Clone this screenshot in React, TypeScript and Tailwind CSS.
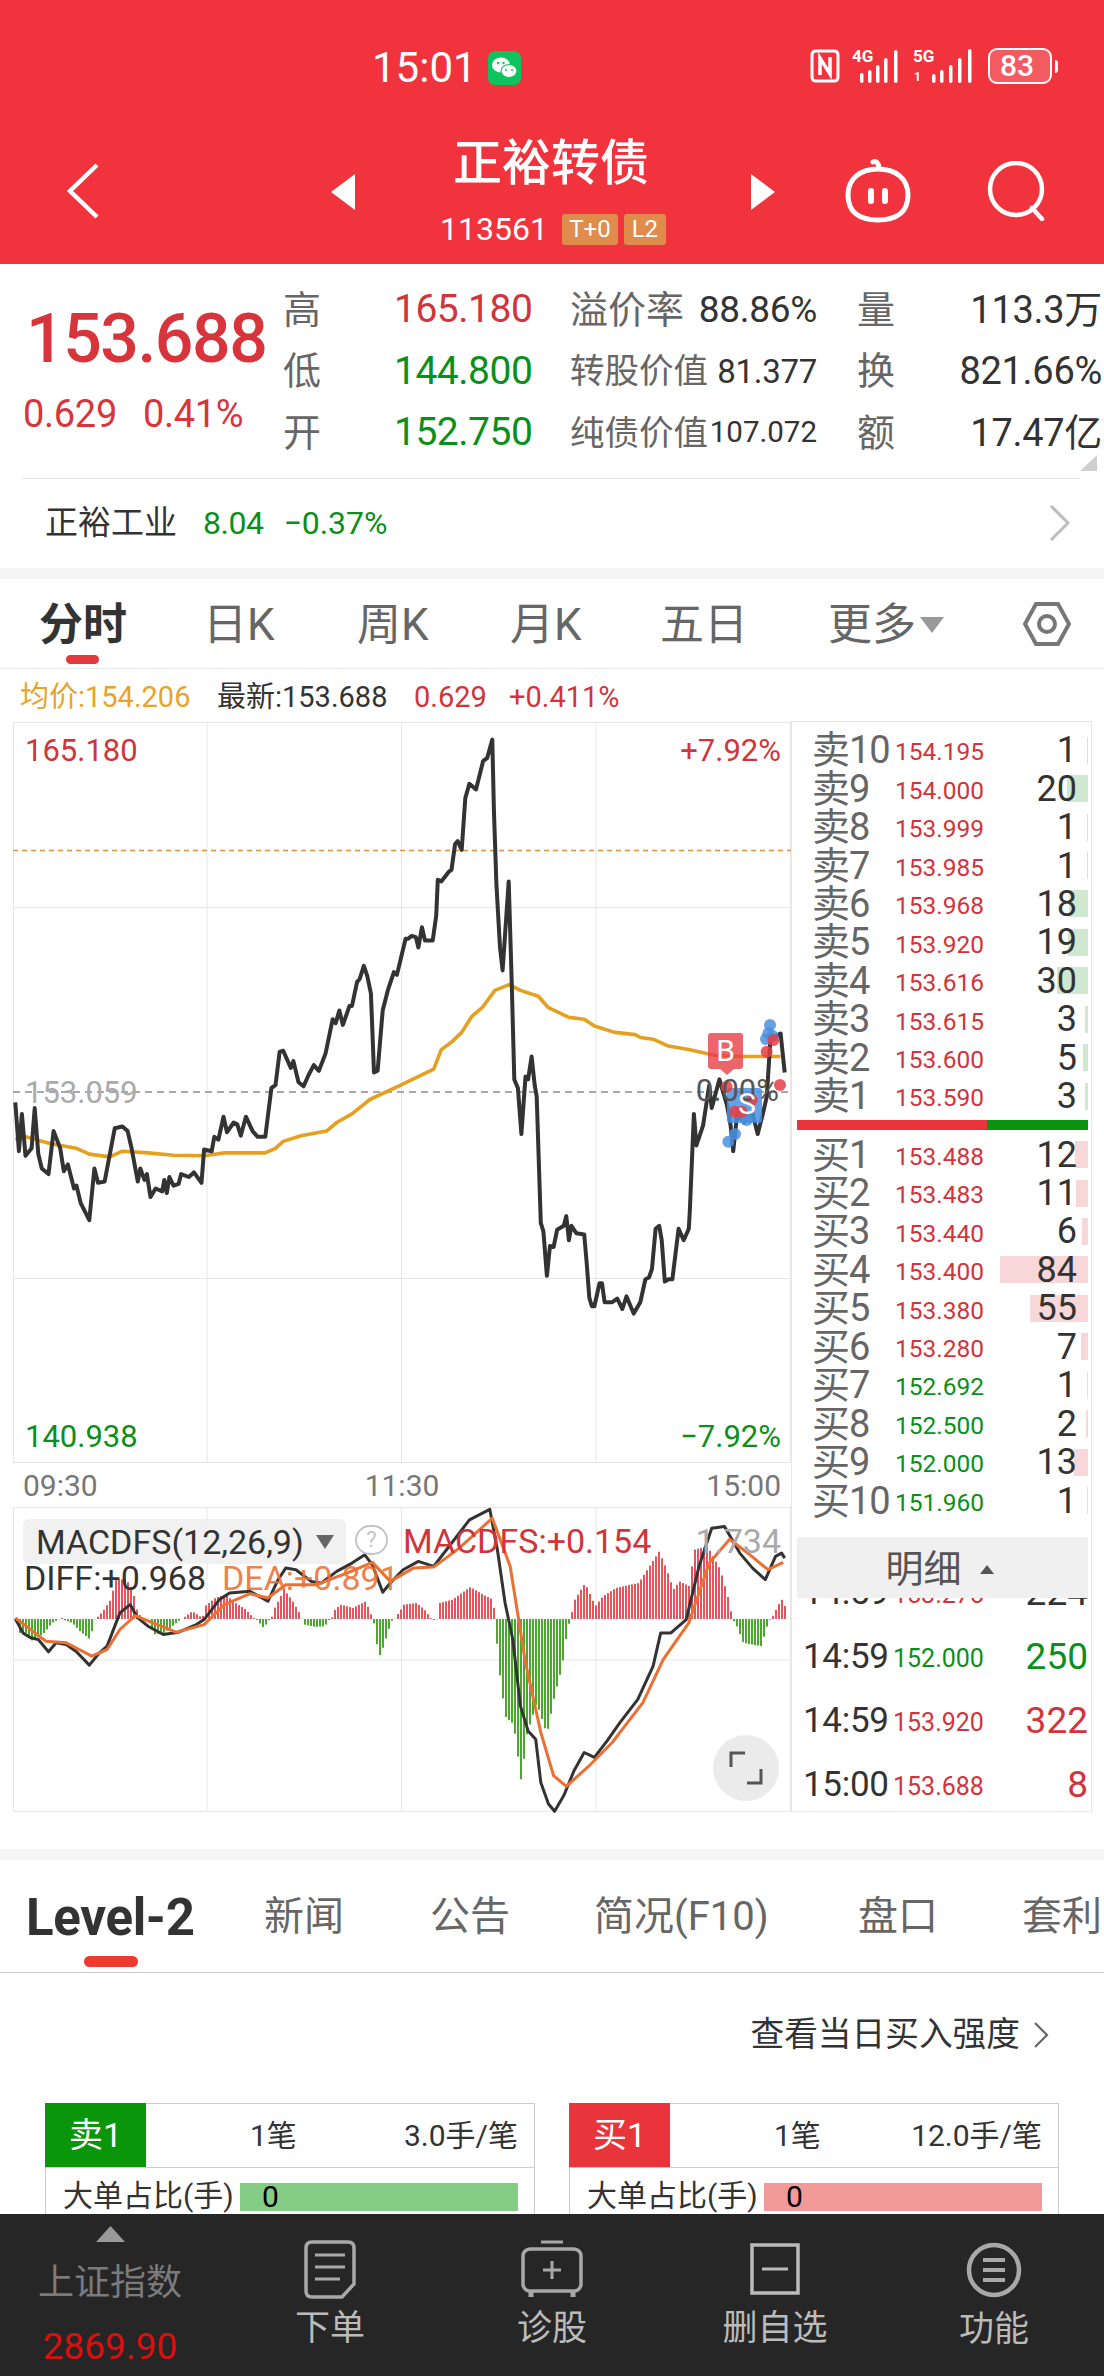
import React from 'react';

type Pt = [number, number];

// traced from the chart, in crop coordinates
const pricePts: Pt[] = [[30,910],[37,995],[43,930],[50,1003],[62,990],[68,920],[75,1000],[82,1025],[95,1035],[105,960],[118,990],[125,1030],[133,1018],[145,1060],[150,1055],[158,1085],[175,1115],[185,1025],[192,1050],[205,1048],[225,955],[240,952],[250,960],[258,990],[270,1048],[275,1025],[283,1045],[288,1035],[295,1075],[305,1060],[318,1065],[322,1045],[327,1068],[332,1040],[340,1055],[350,1052],[355,1035],[370,1040],[380,1032],[395,1050],[400,992],[415,995],[420,970],[428,975],[438,935],[445,962],[458,945],[465,948],[472,968],[482,935],[495,960],[505,970],[520,970],[532,885],[540,880],[548,822],[555,820],[570,850],[575,838],[585,875],[595,882],[605,862],[615,845],[625,855],[638,825],[652,765],[658,772],[665,750],[672,775],[685,742],[690,742],[700,700],[705,695],[713,672],[720,690],[727,720],[733,858],[740,855],[750,750],[760,715],[772,683],[778,688],[795,625],[800,625],[807,620],[815,622],[820,640],[827,605],[833,628],[848,628],[855,585],[858,522],[865,525],[880,508],[885,505],[892,460],[897,455],[905,470],[912,380],[920,355],[933,365],[947,315],[955,310],[965,278],[968,400],[973,530],[980,640],[985,680],[997,525],[1003,700],[1008,870],[1015,885],[1022,965],[1030,865],[1035,870],[1042,830],[1048,880],[1052,900],[1060,1120],[1065,1135],[1072,1212],[1078,1160],[1085,1162],[1092,1132],[1105,1125],[1110,1108],[1115,1150],[1120,1125],[1130,1138],[1145,1140],[1150,1190],[1155,1250],[1160,1265],[1165,1265],[1175,1225],[1180,1225],[1185,1258],[1200,1258],[1210,1252],[1220,1270],[1228,1248],[1242,1278],[1255,1258],[1265,1218],[1272,1215],[1278,1200],[1285,1130],[1292,1125],[1297,1150],[1303,1222],[1310,1218],[1318,1218],[1330,1130],[1340,1150],[1350,1130],[1352,1100],[1360,930],[1365,985],[1378,950],[1390,880],[1395,920],[1410,870],[1425,915],[1432,950],[1437,995],[1445,930],[1458,945],[1475,930],[1485,965],[1495,930],[1503,900],[1510,800],[1530,790],[1538,858]];

const avgPts: Pt[] = [[30,975],[50,970],[100,982],[150,990],[175,1000],[215,1005],[240,995],[290,998],[340,1002],[400,1003],[440,998],[520,998],[540,990],[555,978],[590,968],[640,960],[660,945],[690,930],[725,905],[780,882],[850,852],[865,818],[885,805],[905,788],[925,760],[945,745],[970,715],[998,705],[1020,715],[1055,725],[1075,745],[1115,762],[1145,765],[1165,777],[1205,788],[1245,792],[1255,797],[1280,800],[1310,812],[1350,818],[1400,828],[1450,830],[1530,830]];

const diffPts: Pt[] = [[30,388],[45,430],[60,445],[75,450],[95,487],[110,460],[130,465],[150,487],[175,527],[195,490],[210,470],[235,370],[255,345],[270,385],[290,410],[320,435],[350,428],[385,405],[400,390],[430,330],[450,310],[490,305],[525,335],[545,270],[560,235],[580,240],[610,275],[630,280],[660,245],[690,220],[715,195],[730,225],[750,308],[765,280],[790,240],[820,215],[850,230],[880,170],[920,90],[960,58],[975,180],[990,340],[1005,450],[1020,650],[1035,725],[1050,750],[1060,880],[1075,945],[1087,967],[1105,920],[1125,845],[1145,790],[1165,805],[1190,755],[1215,700],[1250,630],[1280,530],[1295,430],[1315,430],[1345,390],[1370,230],[1395,115],[1420,110],[1450,190],[1475,235],[1500,270],[1520,200],[1532,190],[1538,205]];

const deaPts: Pt[] = [[30,385],[60,420],[90,455],[130,460],[180,500],[210,480],[235,420],[265,378],[300,400],[345,428],[400,405],[440,345],[490,312],[525,325],[560,285],[620,285],[680,250],[730,218],[765,275],[810,235],[850,232],[900,175],[965,85],[1000,230],[1030,520],[1060,730],[1085,860],[1110,892],[1155,830],[1200,760],[1260,640],[1300,510],[1350,400],[1390,220],[1430,148],[1470,195],[1505,240],[1535,218]];

const histEnvelope: Pt[] = [[30,388],[35,430],[50,430],[58,455],[70,445],[85,430],[100,400],[115,388],[120,385],[125,392],[140,400],[155,425],[175,450],[183,390],[186,388],[200,365],[215,330],[225,270],[245,268],[258,300],[268,370],[280,388],[292,388],[298,435],[320,430],[350,392],[355,388],[375,365],[395,385],[400,350],[420,325],[440,315],[460,340],[480,360],[495,385],[500,388],[515,415],[525,392],[530,388],[535,360],[555,300],[570,330],[585,370],[590,388],[595,405],[615,412],[635,410],[642,392],[648,388],[652,365],[665,345],[690,355],[715,335],[728,385],[730,388],[735,450],[742,500],[750,470],[765,395],[772,388],[790,345],[815,340],[830,360],[845,390],[850,392],[857,388],[860,340],[885,330],[920,292],[945,315],[965,330],[968,388],[972,460],[980,590],[990,685],[1005,705],[1020,880],[1030,740],[1050,640],[1070,735],[1085,620],[1100,530],[1110,420],[1116,388],[1125,330],[1145,280],[1165,350],[1180,320],[1205,295],[1250,280],[1290,185],[1305,240],[1318,300],[1330,275],[1350,290],[1358,180],[1385,170],[1410,240],[1430,350],[1432,388],[1440,400],[1455,460],[1490,470],[1505,392],[1510,388],[1530,328],[1540,360]];

const mainLine = (pts: Pt[]) => pts.map(([x, y]) => `${(x / 1.96).toFixed(1)},${(580 + y / 1.742).toFixed(1)}`).join(' ');
const subLine = (pts: Pt[]) => pts.map(([x, y]) => `${(x / 1.96).toFixed(1)},${(1490 + y / 3.01).toFixed(1)}`).join(' ');

const envelopeAt = (x: number) => {
  for (let i = 1; i < histEnvelope.length; i++) {
    const [x0, y0] = histEnvelope[i - 1];
    const [x1, y1] = histEnvelope[i];
    if (x <= x1) return y0 + ((y1 - y0) * (x - x0)) / (x1 - x0 || 1);
  }
  return 388;
};

const histBars = Array.from({ length: 261 }, (_, i) => {
  const px = 16 + i * 3;
  return { px, top: 1490 + envelopeAt(px * 1.96) / 3.01 };
});

const sells = [
  ['卖10', '154.195', 1],
  ['卖9', '154.000', 20],
  ['卖8', '153.999', 1],
  ['卖7', '153.985', 1],
  ['卖6', '153.968', 18],
  ['卖5', '153.920', 19],
  ['卖4', '153.616', 30],
  ['卖3', '153.615', 3],
  ['卖2', '153.600', 5],
  ['卖1', '153.590', 3],
] as const;

const buys = [
  ['买1', '153.488', 12, true],
  ['买2', '153.483', 11, true],
  ['买3', '153.440', 6, true],
  ['买4', '153.400', 84, true],
  ['买5', '153.380', 55, true],
  ['买6', '153.280', 7, true],
  ['买7', '152.692', 1, false],
  ['买8', '152.500', 2, false],
  ['买9', '152.000', 13, false],
  ['买10', '151.960', 1, false],
] as const;

const trades = [
  ['14:59', '153.275', '224', 'text-[#d1343a]', 'text-[#333]'],
  ['14:59', '152.000', '250', 'text-[#0a8f1a]', 'text-[#0a8f1a]'],
  ['14:59', '153.920', '322', 'text-[#d1343a]', 'text-[#d1343a]'],
  ['15:00', '153.688', '8', 'text-[#d1343a]', 'text-[#d1343a]'],
];

const BookRow = ({ label, price, qty, priceColor, barColor }: { label: string; price: string; qty: number; priceColor: string; barColor: string }) => (
  <div className="relative flex h-[38.45px] items-center">
    <div className={`absolute right-0 h-[27px] ${barColor}`} style={{ width: Math.max(qty * 1.05, 1.5) }} />
    <span className="relative w-[98px] shrink-0 pl-[15px] text-[38px] leading-none tracking-[-1px] whitespace-nowrap text-[#666]">{label}</span>
    <span className={`relative mt-[5px] text-[24.5px] leading-none ${priceColor}`}>{price}</span>
    <span className="relative flex-1 pr-[11px] text-right text-[36px] leading-none text-[#333]">{qty}</span>
  </div>
);

const Dot = ({ x, y, c }: { x: number; y: number; c: string }) => <circle cx={640 + x / 3} cy={960 + y / 3} r="6" fill={c} fillOpacity="0.85" />;

const QuoteRow = ({ a, v, color, l, lv, lvSize, b, bv }: { a: string; v: string; color: string; l: React.ReactNode; lv: string; lvSize: string; b: string; bv: string }) => (
  <div className="flex h-[61.5px] items-center">
    <span className="w-[111px] text-[38px] leading-none text-[#666]">{a}</span>
    <span className={`w-[176px] text-[39px] leading-none tracking-[-0.5px] ${color}`}>{v}</span>
    <div className="flex w-[247px] items-center justify-between">
      <span className="whitespace-nowrap leading-none text-[#666]">{l}</span>
      <span className={`leading-none text-[#333] ${lvSize}`}>{lv}</span>
    </div>
    <span className="ml-[40px] w-[60px] text-[38px] leading-none text-[#666]">{b}</span>
    <span className="w-[185px] whitespace-nowrap text-right text-[38px] leading-none tracking-[-0.3px] text-[#333]">{bv}</span>
  </div>
);

const App: React.FC = () => {
  return (
    <div className="flex h-[2376px] w-[1104px] flex-col overflow-hidden bg-white font-['Roboto','Noto_Sans_CJK_SC',sans-serif]">
      {/* red header */}
      <header className="h-[264px] shrink-0 bg-[#f0333c] text-white">
        <div className="flex h-[136px] items-start pt-[48px]">
          <span className="ml-[372px] w-[100px] whitespace-nowrap text-[42px] leading-[40px]">15:01</span>
          <svg className="ml-[16px] mt-[3px]" width="33" height="34" viewBox="0 0 33 34">
            <rect width="33" height="34" rx="7" fill="#0fc45e" />
            <ellipse cx="13" cy="14" rx="9" ry="7.5" fill="#fff" />
            <ellipse cx="21" cy="20" rx="8" ry="6.5" fill="#fff" stroke="#0fc45e" strokeWidth="1.2" />
            <circle cx="10" cy="12" r="1.2" fill="#0fc45e" />
            <circle cx="15.5" cy="12" r="1.2" fill="#0fc45e" />
            <circle cx="18" cy="19" r="1" fill="#0fc45e" />
            <circle cx="24" cy="19" r="1" fill="#0fc45e" />
          </svg>
          <div className="ml-[289px] flex items-center">
            <svg width="30" height="34" viewBox="0 0 30 34" fill="none" stroke="#fff" strokeWidth="3">
              <path d="M6 2 H24 Q28 2 28 6 V28 Q28 32 24 32 H6 Q2 32 2 28 V6 Q2 2 6 2Z" />
              <path d="M10 26 V9 L20 25 V8" strokeWidth="3.5" />
            </svg>
            <div className="relative ml-[12px] h-[34px] w-[50px]">
              <span className="absolute left-0 top-[-1px] text-[17px] font-bold leading-none">4G</span>
              <svg className="absolute left-0 top-0" width="50" height="34" fill="#fff">
                <rect x="8" y="24" width="3.5" height="10" rx="1.7" />
                <rect x="16" y="21" width="3.5" height="13" rx="1.7" />
                <rect x="24" y="16" width="3.5" height="18" rx="1.7" />
                <rect x="32" y="9" width="3.5" height="25" rx="1.7" />
                <rect x="42" y="1" width="3.5" height="33" rx="1.7" />
              </svg>
            </div>
            <div className="relative ml-[11px] h-[34px] w-[63px]">
              <span className="absolute left-0 top-[-1px] text-[17px] font-bold leading-none">5G</span>
              <span className="absolute left-[1px] top-[22px] text-[12px] font-bold leading-none">1</span>
              <svg className="absolute left-0 top-0" width="63" height="34" fill="#fff">
                <rect x="19" y="25" width="3.5" height="9" rx="1.7" />
                <rect x="27" y="21" width="3.5" height="13" rx="1.7" />
                <rect x="36" y="16" width="3.5" height="18" rx="1.7" />
                <rect x="45" y="9" width="3.5" height="25" rx="1.7" />
                <rect x="55" y="0" width="3.5" height="34" rx="1.7" />
              </svg>
            </div>
            <div className="ml-[12px] flex h-[36px] w-[64px] items-center rounded-[9px] border-[2px] border-white bg-white/20">
              <span className="w-[54px] text-center text-[30px] font-medium leading-none">83</span>
            </div>
            <div className="ml-[3px] h-[13px] w-[3px] rounded-r-full bg-white" />
          </div>
        </div>
        <div className="flex items-start">
          <svg className="ml-[66px] mt-[27px]" width="34" height="56" viewBox="0 0 34 56" fill="none" stroke="#fff" strokeWidth="4.5">
            <path d="M31 2 L4 28 L31 54" />
          </svg>
          <svg className="ml-[231px] mt-[38px]" width="24" height="36" viewBox="0 0 24 36" fill="#fff">
            <path d="M24 0 V36 L0 18Z" />
          </svg>
          <div className="ml-[85px] flex w-[230px] flex-col pt-[3px]">
            <span className="whitespace-nowrap pl-[13px] text-[49px] font-medium leading-[50px]">正裕转债</span>
            <div className="mt-[24px] flex items-center">
              <span className="text-[32px] leading-[32px]">113561</span>
              <span className="ml-[14px] flex h-[31px] w-[56px] items-center justify-center rounded-[3px] bg-[#e08c4c] text-[24px] leading-none">T+0</span>
              <span className="ml-[6px] flex h-[31px] w-[42px] items-center justify-center rounded-[3px] bg-[#e08c4c] text-[24px] leading-none">L2</span>
            </div>
          </div>
          <svg className="ml-[81px] mt-[38px]" width="24" height="36" viewBox="0 0 24 36" fill="#fff">
            <path d="M0 0 V36 L24 18Z" />
          </svg>
          <svg className="ml-[67px] mt-[22px]" width="72" height="66" viewBox="0 0 72 64" fill="none" stroke="#fff" strokeWidth="5">
            <path d="M31 3 Q36 1 37 9" strokeLinecap="round" />
            <path d="M6 36 C6 19 19 10 36 10 C53 10 66 19 66 36 C66 53 55 61 36 61 C17 61 6 53 6 36Z" />
            <path d="M29 32 V42 M43 32 V42" strokeWidth="6" strokeLinecap="round" />
          </svg>
          <svg className="ml-[72px] mt-[25px]" width="62" height="60" viewBox="0 0 62 60" fill="none" stroke="#fff" strokeWidth="4.5">
            <circle cx="30" cy="28" r="26" />
            <path d="M46 47 L56 58" strokeLinecap="round" />
          </svg>
        </div>
      </header>

      {/* quote */}
      <section className="relative flex h-[215px] shrink-0">
        <div className="w-[283px] shrink-0 pl-[26px]">
          <div className="mt-[41px] text-[68px] font-medium leading-[68px] tracking-[-1.5px] text-[#d8343c]">153.688</div>
          <div className="mt-[23px] flex text-[38px] leading-[36px] text-[#d8343c]">
            <span className="-ml-[3px] tracking-[-0.3px]">0.629</span>
            <span className="ml-[26px] tracking-[-0.3px]">0.41%</span>
          </div>
        </div>
        <div className="pt-[15px]">
          <QuoteRow a="高" v="165.180" color="text-[#d1343a]" l={<span className="text-[38px]">溢价率</span>} lv="88.86%" lvSize="text-[37px] tracking-[-0.3px]" b="量" bv="113.3万" />
          <QuoteRow a="低" v="144.800" color="text-[#0a8f1a]" l={<span className="text-[34.5px]">转股价值</span>} lv="81.377" lvSize="text-[33px] tracking-[-0.3px]" b="换" bv="821.66%" />
          <QuoteRow a="开" v="152.750" color="text-[#0a8f1a]" l={<span className="text-[34.5px]">纯债价值</span>} lv="107.072" lvSize="text-[29.5px]" b="额" bv="17.47亿" />
        </div>
        <svg className="absolute left-[1080px] top-[191px]" width="17" height="16" fill="#cfcfcf"><path d="M17 0 V16 H0Z" /></svg>
        <div className="absolute bottom-0 left-[22px] h-[1px] w-[1057px] bg-[#e5e5e5]" />
      </section>

      <section className="flex h-[89px] shrink-0 items-center pb-[2px]">
        <span className="ml-[45px] text-[33px] leading-none text-[#333]">正裕工业</span>
        <span className="ml-[26px] text-[32px] leading-none tracking-[-0.5px] text-[#0a8f1a]">8.04</span>
        <span className="ml-[20px] text-[32px] leading-none text-[#0a8f1a]">−0.37%</span>
        <svg className="ml-auto mr-[33px]" width="22" height="36" viewBox="0 0 22 36" fill="none" stroke="#bdbdbd" strokeWidth="3">
          <path d="M2 1 L19 18 L2 35" />
        </svg>
      </section>
      <div className="h-[11px] shrink-0 bg-[#f5f5f5]" />

      {/* chart tabs */}
      <nav className="grid h-[90px] shrink-0 grid-cols-[164px_154px_153px_150px_168px_195px_auto] items-center border-b border-[#e8e8e8] pl-[39px] pt-[2px] text-[44px] leading-none text-[#666]">
        <span className="relative whitespace-nowrap font-bold text-[#333]">
          分时
          <span className="absolute left-[27px] top-[52px] h-[9px] w-[33px] rounded-full bg-[#e23a3f]" />
        </span>
        <span>日K</span>
        <span>周K</span>
        <span>月K</span>
        <span>五日</span>
        <span className="flex items-center">
          更多
          <svg className="ml-[4px]" width="24" height="16" fill="#999"><path d="M0 0 H24 L12 16Z" /></svg>
        </span>
        <svg className="-mt-[2px]" width="48" height="48" viewBox="0 0 48 48" fill="none" stroke="#777" strokeWidth="4">
          <path d="M13 4 H35 L46 24 L35 44 H13 L2 24Z" />
          <circle cx="24" cy="24" r="8" />
        </svg>
      </nav>

      <div className="flex h-[52px] shrink-0 items-center whitespace-nowrap pt-[5px] text-[29px] leading-none">
        <span className="ml-[20px] w-[197px] text-[#e8a32a]">均价:154.206</span>
        <span className="w-[197px] text-[#333]">最新:153.688</span>
        <span className="w-[95px] text-[#d1343a]">0.629</span>
        <span className="text-[#d1343a]">+0.411%</span>
      </div>

      {/* chart and order book */}
      <section className="flex h-[1091px] shrink-0 pl-[13px]">
        <div className="w-[778px] shrink-0">
          <div className="relative mt-[1px] h-[741px] text-[31px] leading-none">
            <svg className="absolute inset-0 h-full w-full overflow-visible" viewBox="13 722 778 741" fill="none">
              <rect x="13.5" y="722.5" width="777" height="740" stroke="#e6e6e6" />
              <path d="M207 722 V1463 M401.5 722 V1463 M596 722 V1463 M13 907.5 H791 M13 1278.5 H791" stroke="#e6e6e6" />
              <path d="M13 850.5 H791" stroke="#e0903e" strokeWidth="1.5" strokeDasharray="5 4" />
              <path d="M13 1092 H791" stroke="#a8a8a8" strokeWidth="1.8" strokeDasharray="7 5" />
              <polyline points={mainLine(avgPts)} stroke="#e6a020" strokeWidth="3.6" strokeLinejoin="round" />
              <polyline points={mainLine(pricePts)} stroke="#333" strokeWidth="4" strokeLinejoin="round" />
              <rect x="727" y="1088" width="35" height="35" rx="3" fill="#4a90e2" fillOpacity="0.85" />
              <Dot x={390} y={195} c="#4a90e2" />
              <Dot x={385} y={220} c="#4a90e2" />
              <Dot x={378} y={237} c="#4a90e2" />
              <Dot x={398} y={228} c="#4a90e2" />
              <Dot x={285} y={522} c="#4a90e2" />
              <Dot x={265} y={545} c="#4a90e2" />
              <Dot x={320} y={480} c="#4a90e2" />
              <Dot x={380} y={275} c="#e63e45" />
              <Dot x={400} y={240} c="#e63e45" />
              <Dot x={420} y={375} c="#e63e45" />
              <Dot x={335} y={420} c="#e63e45" />
              <Dot x={285} y={455} c="#e63e45" />
              <Dot x={305} y={455} c="#e63e45" />
              <Dot x={260} y={380} c="#e63e45" />
            </svg>
            <span className="absolute left-[12px] top-[13px] text-[#d1343a]">165.180</span>
            <span className="absolute right-[10px] top-[13px] text-[#d1343a]">+7.92%</span>
            <span className="absolute left-[12px] top-[355px] text-[#aaa]">153.059</span>
            <span className="absolute bottom-[11px] left-[12px] text-[#0a8f1a]">140.938</span>
            <span className="absolute bottom-[11px] right-[10px] text-[#0a8f1a]">−7.92%</span>
            <span className="absolute right-[12px] top-[353px] text-[#555]">0.00%</span>
            <div className="absolute left-[695px] top-[311px] flex h-[36px] w-[35px] items-center justify-center rounded-[3px] bg-[#e63e45]/80 text-[30px] text-white">B</div>
            <div className="absolute left-[707px] top-[347px] h-0 w-0 border-x-[7px] border-t-[6px] border-x-transparent border-t-[#e63e45]/80" />
            <span className="absolute left-[725px] top-[367px] text-[30px] text-white">S</span>
          </div>
          <div className="flex h-[44px] items-center justify-between px-[10px] pt-[2px] text-[30px] leading-none text-[#777]">
            <span>09:30</span>
            <span>11:30</span>
            <span>15:00</span>
          </div>
          <div className="relative h-[305px] text-[34px] leading-none">
            <svg className="absolute inset-0 h-full w-full overflow-visible" viewBox="13 1507 778 305" fill="none">
              <rect x="13.5" y="1507.5" width="777" height="304" stroke="#e6e6e6" />
              <path d="M207 1507 V1812 M401.5 1507 V1812 M596 1507 V1812 M13 1660 H791" stroke="#e6e6e6" />
              {histBars.map(b => (
                <rect key={b.px} x={b.px} y={Math.min(b.top, 1619)} width="2" height={Math.abs(b.top - 1619)} fill={b.top < 1619 ? '#e0565c' : '#49a82d'} />
              ))}
              <polyline points={subLine(diffPts)} stroke="#333" strokeWidth="3" strokeLinejoin="round" />
              <polyline points={subLine(deaPts)} stroke="#ec7034" strokeWidth="3" strokeLinejoin="round" />
            </svg>
            <div className="absolute left-[10px] top-[12px] flex h-[45px] w-[323px] items-center rounded-[6px] bg-[#f0f0f0]/90 pl-[13px] text-[#333]">
              MACDFS(12,26,9)
              <svg className="ml-[12px]" width="18" height="14" fill="#666"><path d="M0 0 H18 L9 14Z" /></svg>
            </div>
            <div className="absolute left-[342px] top-[18px] flex h-[30px] w-[33px] items-center justify-center rounded-full border-[2px] border-[#c4c4c4] text-[22px] text-[#c4c4c4]">?</div>
            <span className="absolute left-[390px] top-[17px] text-[#d1343a]">MACDFS:+0.154</span>
            <span className="absolute right-[10px] top-[17px] text-[#aaa]">1.734</span>
            <span className="absolute left-[11px] top-[54px] text-[#333]">DIFF:+0.968</span>
            <span className="absolute left-[209px] top-[54px] text-[#ec7034]/90">DEA:+0.891</span>
            <div className="absolute left-[700px] top-[228px] flex h-[66px] w-[66px] items-center justify-center rounded-full bg-[#ebebeb]">
              <svg width="34" height="34" viewBox="0 0 34 34" fill="none" stroke="#555" strokeWidth="3">
                <path d="M2 16 V2 H16 M32 18 V32 H18" />
              </svg>
            </div>
          </div>
        </div>

        <aside className="flex h-[1091px] w-[301px] shrink-0 flex-col overflow-hidden border border-[#e8e8e8] pl-[5px] pr-[3px]">
          <div className="pt-[9px]">
            {sells.map(([l, p, q]) => (
              <BookRow key={l} label={l} price={p} qty={q} priceColor="text-[#d1343a]" barColor="bg-[#cfe8cf]" />
            ))}
          </div>
          <div className="mt-[5px] flex h-[10px] shrink-0">
            <div className="w-[190px] bg-[#e8343a]" />
            <div className="flex-1 bg-[#0a930f]" />
          </div>
          <div className="mt-[5px]">
            {buys.map(([l, p, q, up]) => (
              <BookRow key={l} label={l} price={p} qty={q} priceColor={up ? 'text-[#d1343a]' : 'text-[#0a8f1a]'} barColor="bg-[#f8d7d9]" />
            ))}
          </div>
          <div className="mt-[17px] flex h-[61px] shrink-0 items-center justify-center bg-[#f0f0f0] pr-[6px] pt-[4px] text-[38px] leading-none text-[#555]">
            明细
            <svg className="ml-[18px]" width="14" height="9" fill="#555"><path d="M7 0 L14 9 H0Z" /></svg>
          </div>
          <div className="min-h-0 flex-1 overflow-hidden">
            <div className="-mt-[37px]">
              {trades.map(([t, p, q, pc, qc]) => (
                <div key={t + p} className="flex h-[64px] items-center">
                  <span className="w-[96px] pl-[6px] text-[35px] leading-none tracking-[-0.3px] text-[#333]">{t}</span>
                  <span className={`mt-[4px] text-[25px] leading-none ${pc}`}>{p}</span>
                  <span className={`flex-1 text-right text-[37px] leading-none ${qc}`}>{q}</span>
                </div>
              ))}
            </div>
          </div>
        </aside>
      </section>

      <div className="h-[37px] shrink-0" />
      <div className="h-[11px] shrink-0 bg-[#f5f5f5]" />

      {/* lower tabs */}
      <nav className="grid h-[113px] shrink-0 grid-cols-[238px_169px_164px_261px_164px_auto] items-center whitespace-nowrap border-b border-[#ccc] pl-[26px] pt-[2px] text-[40px] leading-none text-[#666]">
        <span className="relative text-[51px] font-bold tracking-[-0.3px] text-[#333]">
          Level-2
          <span className="absolute left-[58px] top-[64px] h-[11px] w-[54px] rounded-full bg-[#f03a30]" />
        </span>
        <span>新闻</span>
        <span className="-ml-[3px]">公告</span>
        <span className="-ml-[3px]">简况(F10)</span>
        <span>盘口</span>
        <span>套利</span>
      </nav>

      <div className="h-[241px] shrink-0 overflow-hidden">
        <div className="flex h-[130px] items-center justify-end pb-[6px] pr-[55px] text-[33.7px] leading-none text-[#333]">
          查看当日买入强度
          <svg className="ml-[14px]" width="15" height="26" viewBox="0 0 15 26" fill="none" stroke="#666" strokeWidth="2.2">
            <path d="M1 1 L13 13 L1 25" />
          </svg>
        </div>
        <div className="flex pl-[45px] text-[#333]">
          {[
            { side: '卖1', bg: 'bg-[#0a960a]', bar: 'bg-[#85cc85]', per: '3.0手/笔' },
            { side: '买1', bg: 'bg-[#e8343a]', bar: 'bg-[#f29999]', per: '12.0手/笔' },
          ].map((c, i) => (
            <div key={c.side} className={`h-[140px] w-[490px] border border-[#ccc] ${i ? 'ml-[34px]' : ''}`}>
              <div className="flex h-[64px] items-center border-b border-[#ccc] text-[30px] leading-none">
                <span className={`-ml-[1px] -mt-[1px] flex h-[64px] w-[101px] items-center justify-center text-[34px] text-white ${c.bg}`}>{c.side}</span>
                <span className="ml-[104px] whitespace-nowrap">1笔</span>
                <span className="ml-auto mr-[16px] whitespace-nowrap">{c.per}</span>
              </div>
              <div className="flex h-[43px] items-end pl-[17px] text-[30px] leading-none">
                <span className="w-[177px] whitespace-nowrap">大单占比(手)</span>
                <div className={`flex h-[28px] w-[278px] items-center pl-[22px] text-black ${c.bar}`}>0</div>
              </div>
            </div>
          ))}
        </div>
      </div>

      {/* bottom bar */}
      <footer className="flex h-[162px] shrink-0 bg-[#262626] text-[35px] leading-none text-[#bbb]">
        <div className="flex w-[222px] shrink-0 flex-col items-center pr-[2px]">
          <svg className="mt-[12px]" width="29" height="16" fill="#999"><path d="M14.5 0 L29 16 H0Z" /></svg>
          <span className="mt-[23px] text-[36px] text-[#7b7b7b]">上证指数</span>
          <span className="mt-[27px] text-[37px] text-[#d81010]">2869.90</span>
        </div>
        <div className="flex w-[216px] shrink-0 flex-col items-center pt-[26px]">
          <svg width="52" height="59" viewBox="0 0 52 59" fill="none" stroke="#a8a8a8" strokeWidth="3.5">
            <path d="M8 2 H44 Q50 2 50 8 V44 L38 57 H8 Q2 57 2 51 V8 Q2 2 8 2Z" />
            <path d="M11 15 H41 M11 27 H41 M11 39 H36" strokeWidth="3" />
          </svg>
          <span className="mt-[12px]">下单</span>
        </div>
        <div className="flex w-[228px] shrink-0 flex-col items-center pt-[26px]">
          <svg width="62" height="59" viewBox="0 0 62 59" fill="none" stroke="#a8a8a8" strokeWidth="3.5">
            <path d="M20 2 H42" strokeWidth="3" />
            <rect x="2" y="9" width="58" height="42" rx="7" />
            <path d="M31 21 V39 M22 30 H40" strokeWidth="3" />
            <path d="M10 51 V57 M52 51 V57" strokeWidth="5" />
          </svg>
          <span className="mt-[12px]">诊股</span>
        </div>
        <div className="flex w-[218px] shrink-0 flex-col items-center pt-[29px]">
          <svg width="50" height="52" viewBox="0 0 50 52" fill="none" stroke="#bbb" strokeWidth="3.5">
            <rect x="2" y="2" width="46" height="48" />
            <path d="M12 26 H38" strokeWidth="3" />
          </svg>
          <span className="mt-[16px]">删自选</span>
        </div>
        <div className="flex flex-1 flex-col items-center pt-[28px]">
          <svg width="56" height="56" viewBox="0 0 56 56" fill="none" stroke="#a8a8a8" strokeWidth="4.5">
            <circle cx="28" cy="28" r="25" />
            <path d="M17 18 H39 M17 28 H39 M17 38 H39" strokeWidth="4" />
          </svg>
          <span className="mt-[14px]">功能</span>
        </div>
      </footer>
    </div>
  );
};

export default App;
